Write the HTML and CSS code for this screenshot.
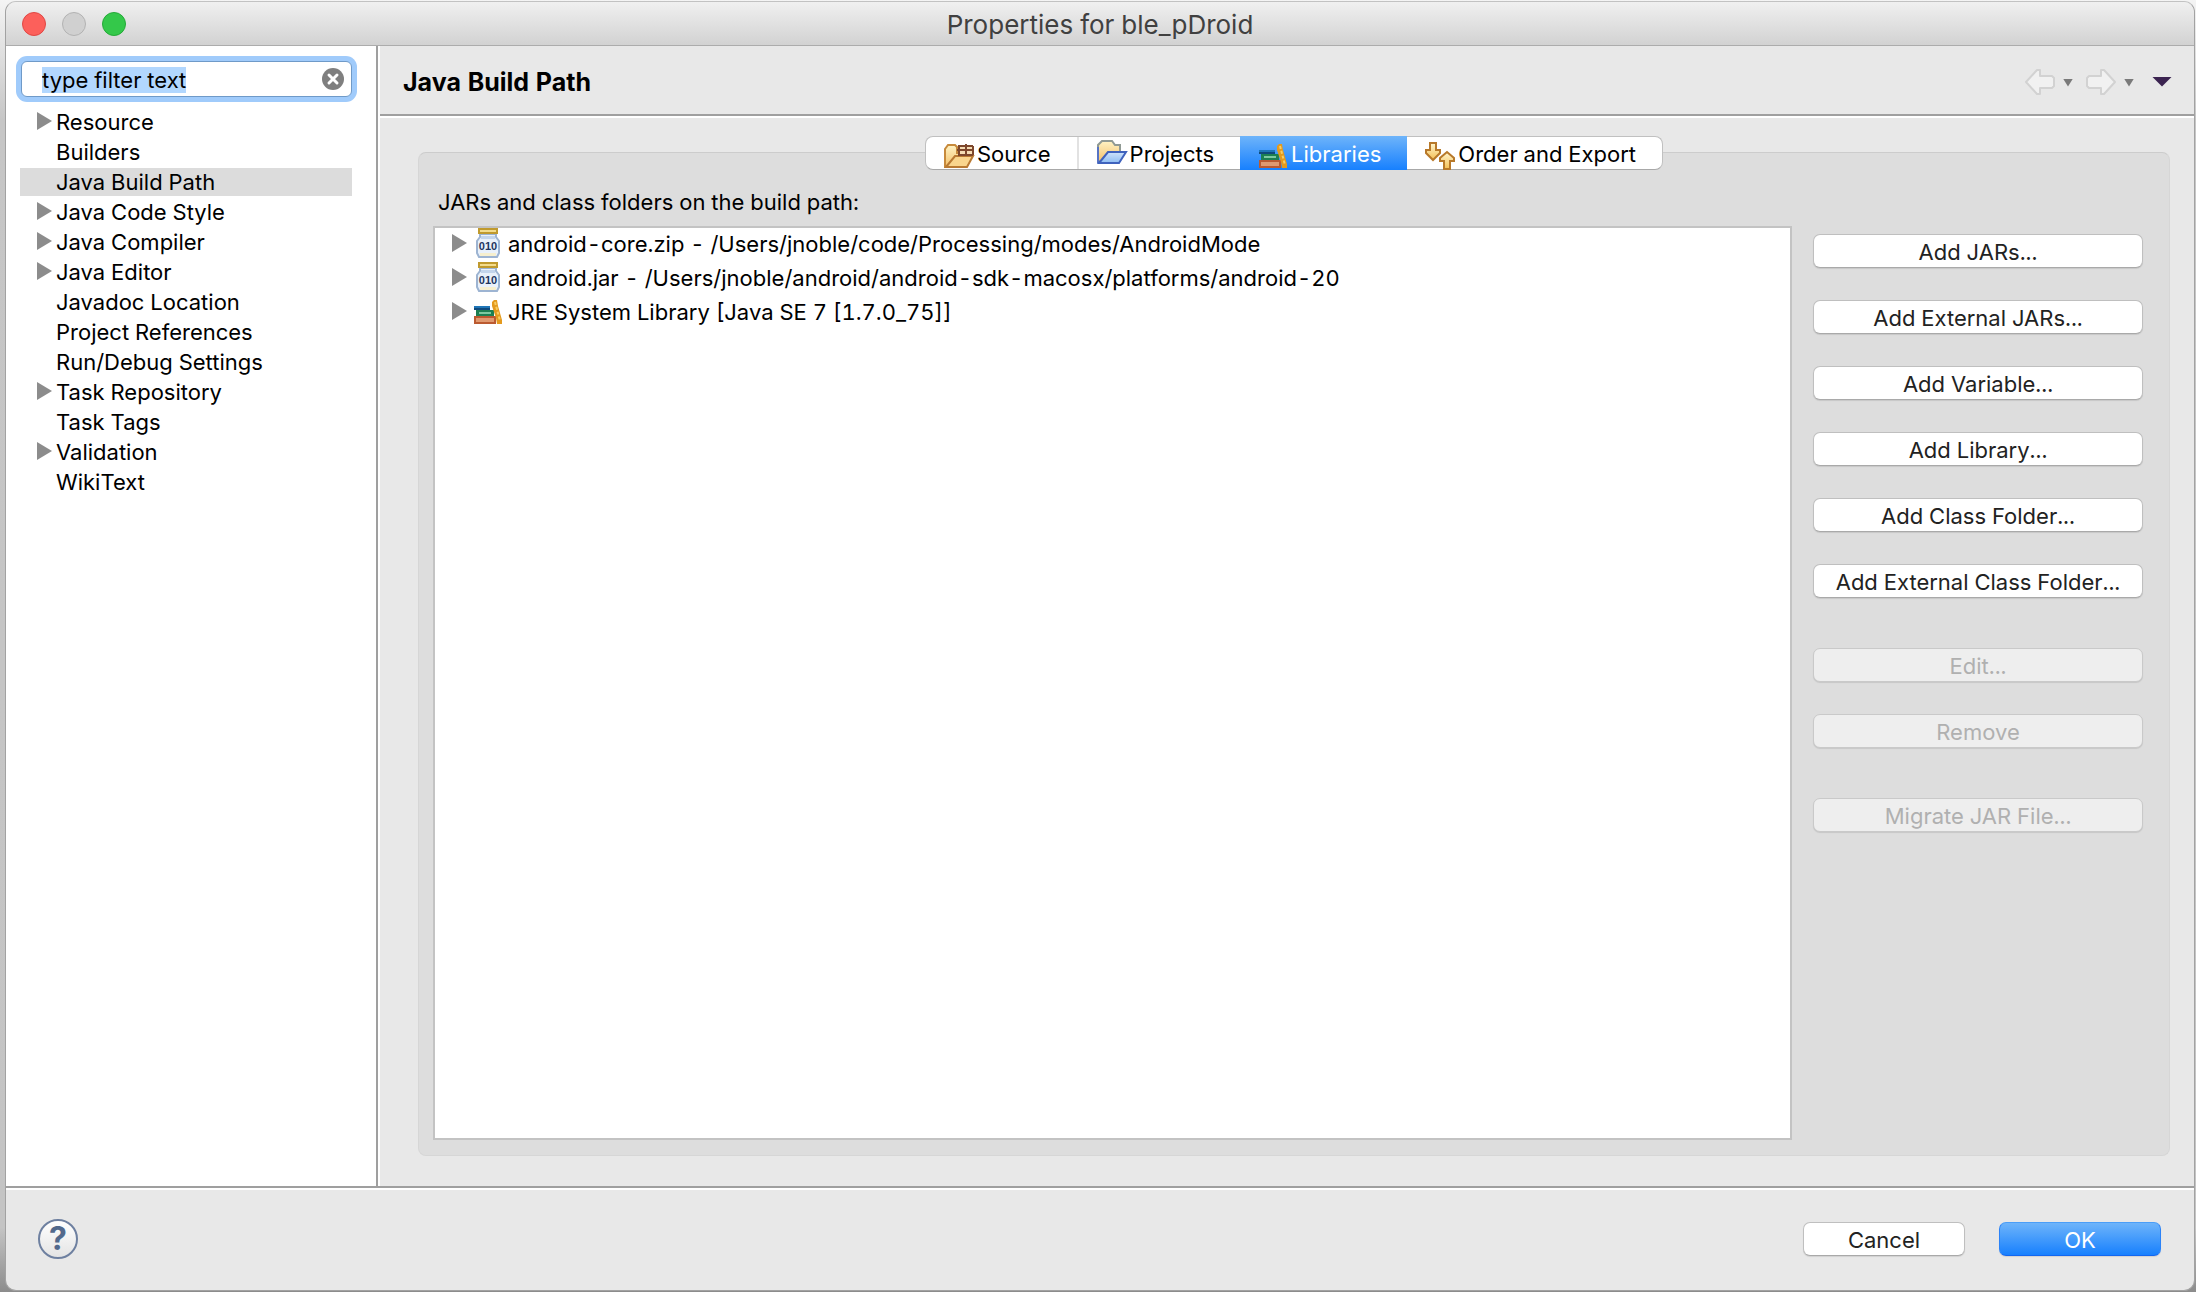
FILE: index.html
```html
<!DOCTYPE html>
<html lang="en">
<head>
<meta charset="utf-8">
<title>Properties for ble_pDroid</title>
<link rel="stylesheet" href="styles.css">
</head>
<body>
<svg class="defs" aria-hidden="true">
  <defs>
    <linearGradient id="fold" x1="0" y1="0" x2="0" y2="1"><stop offset="0" stop-color="#fff3c4"/><stop offset="1" stop-color="#f3c06a"/></linearGradient>
    <linearGradient id="blue" x1="0" y1="0" x2="0" y2="1"><stop offset="0" stop-color="#cfe3fb"/><stop offset="1" stop-color="#8dbcf2"/></linearGradient>
    <linearGradient id="gold" x1="0" y1="0" x2="0" y2="1"><stop offset="0" stop-color="#fff6cf"/><stop offset="1" stop-color="#f4bf55"/></linearGradient>
    <symbol id="jar" viewBox="0 0 32 32">
      <path d="M8 6h16v3l3 4v12l-2 4H7l-2-4V13l3-4z" fill="#e9f1fb" stroke="#9db4d2" stroke-width="2"/>
      <path d="M9 8h14v3H9z" fill="#c3d5ec"/>
      <path d="M8 25h16v3H8z" fill="#f6efcf"/>
      <rect x="7" y="1" width="18" height="4" fill="#f3dc8c" stroke="#c09a2e" stroke-width="2"/>
      <text x="16" y="22" text-anchor="middle" class="jar-bits">010</text>
    </symbol>
    <symbol id="books" viewBox="0 0 32 32">
      <rect x="2" y="10" width="16" height="4" fill="#1f76b8"/>
      <path d="M2 12h16v2H2z" fill="#0f4a7c"/>
      <rect x="4" y="14" width="18" height="6" fill="#1c7f52"/>
      <rect x="7" y="16" width="12" height="2" fill="#7cc9a0"/>
      <rect x="2" y="20" width="22" height="8" fill="#bb5a30"/>
      <rect x="4" y="22" width="18" height="4" fill="#e0996f"/>
      <path d="M20 6l2-2h3l1 6 2 7 2 7v4h-5l-1-6-2-6-2-6z" fill="#e49a1e"/>
      <path d="M23 6l5 19" stroke="#f9cd62" stroke-width="2" stroke-dasharray="3 2"/>
    </symbol>
    <symbol id="source" viewBox="0 0 32 32">
      <path d="M2 27V9l3-4h7l2 2v6h10v4l-5 10z" fill="url(#fold)" stroke="#c78a3c" stroke-width="2"/>
      <path d="M3 27l9-11h18l-6 11z" fill="#f9d58d" stroke="#b97a33" stroke-width="2"/>
      <rect x="16" y="6" width="14" height="9" fill="#f5dcb4"/>
      <path d="M16 6v9M23 4v12M30 6v9M15 6h15M14 10h17M15 15h15" fill="none" stroke="#7d472c" stroke-width="2"/>
    </symbol>
    <symbol id="project" viewBox="0 0 32 32">
      <path d="M2 22V5l4-4h10l3 4h5v10z" fill="url(#fold)" stroke="#909a94" stroke-width="2"/>
      <path d="M2 7v16" stroke="#5673c4" stroke-width="2"/>
      <path d="M3 23l9-11h18l-7 11z" fill="url(#blue)" stroke="#3f62bd" stroke-width="2"/>
    </symbol>
    <symbol id="order" viewBox="0 0 32 32">
      <path d="M6 3h6v7h4v3l-7 7-7-7v-3h4z" fill="url(#gold)" stroke="#b8792a" stroke-width="2"/>
      <path d="M20 29v-8h-4v-3l7-6 7 6v3h-4v8z" fill="url(#gold)" stroke="#b8792a" stroke-width="2"/>
    </symbol>
    <symbol id="arrow" viewBox="0 0 32 28">
      <path d="M2 14L13 2h3v6h12l2 2v8l-2 2H16v6h-3z" fill="#f1f1f1" stroke="#d2d2d2" stroke-width="2" stroke-linejoin="round"/>
    </symbol>
  </defs>
</svg>

<main class="window">
  <header class="titlebar">
    <div class="lights">
      <button class="light close" aria-label="Close"></button>
      <button class="light minimize" aria-label="Minimize" disabled></button>
      <button class="light zoom" aria-label="Zoom"></button>
    </div>
    <h1>Properties for ble_pDroid</h1>
  </header>

  <div class="body">
    <nav class="sidebar">
      <div class="search">
        <input id="filter" type="text" value="type filter text" aria-label="Filter" spellcheck="false">
        <button class="clear" aria-label="Clear filter"><svg viewBox="0 0 22 22"><circle cx="11" cy="11" r="11" fill="#7f7f7f"/><path d="M7 7l8 8M15 7l-8 8" stroke="#fff" stroke-width="3" stroke-linecap="round"/></svg></button>
      </div>
      <ul class="tree">
        <li class="parent">Resource</li>
        <li>Builders</li>
        <li class="selected">Java Build Path</li>
        <li class="parent">Java Code Style</li>
        <li class="parent">Java Compiler</li>
        <li class="parent">Java Editor</li>
        <li>Javadoc Location</li>
        <li>Project References</li>
        <li>Run/Debug Settings</li>
        <li class="parent">Task Repository</li>
        <li>Task Tags</li>
        <li class="parent">Validation</li>
        <li>WikiText</li>
      </ul>
    </nav>

    <section class="page">
      <header class="page-head">
        <h2>Java Build Path</h2>
        <div class="history">
          <button aria-label="Back" disabled><svg class="arrow"><use href="#arrow"/></svg></button>
          <button class="drop" aria-label="Back history" disabled></button>
          <button aria-label="Forward" disabled><svg class="arrow forward"><use href="#arrow"/></svg></button>
          <button class="drop" aria-label="Forward history" disabled></button>
          <button class="view-menu" aria-label="View menu"></button>
        </div>
      </header>

      <div class="page-body">
        <div class="tabs" role="tablist">
          <button role="tab"><svg><use href="#source"/></svg>Source</button>
          <button role="tab"><svg><use href="#project"/></svg>Projects</button>
          <button role="tab" aria-selected="true"><svg><use href="#books"/></svg>Libraries</button>
          <button role="tab"><svg><use href="#order"/></svg>Order and Export</button>
        </div>
        <div class="panel">
          <p class="caption" id="caption">JARs and class folders on the build path:</p>
          <div class="columns">
            <ul class="entries" aria-labelledby="caption">
              <li><svg><use href="#jar"/></svg>android-core.zip - /Users/jnoble/code/Processing/modes/AndroidMode</li>
              <li><svg><use href="#jar"/></svg>android.jar - /Users/jnoble/android/android-sdk-macosx/platforms/android-20</li>
              <li><svg><use href="#books"/></svg>JRE System Library [Java SE 7 [1.7.0_75]]</li>
            </ul>
            <div class="actions">
              <div class="group">
                <button class="push">Add JARs...</button>
                <button class="push">Add External JARs...</button>
                <button class="push">Add Variable...</button>
                <button class="push">Add Library...</button>
                <button class="push">Add Class Folder...</button>
                <button class="push">Add External Class Folder...</button>
              </div>
              <div class="group">
                <button class="push" disabled>Edit...</button>
                <button class="push" disabled>Remove</button>
              </div>
              <div class="group">
                <button class="push" disabled>Migrate JAR File...</button>
              </div>
            </div>
          </div>
        </div>
      </div>
    </section>
  </div>

  <footer class="footer">
    <button class="help" aria-label="Help">?</button>
    <div class="confirm">
      <button class="push">Cancel</button>
      <button class="push primary">OK</button>
    </div>
  </footer>
</main>
<script src="main.js"></script>
</body>
</html>
```
FILE: main.js
```js
const filter = document.getElementById('filter');
filter.focus();
filter.select();
document.querySelector('.clear').addEventListener('click', () => {
  filter.value = '';
  filter.focus();
});
```
FILE: styles.css
```css
* { box-sizing: border-box; }

body {
  margin: 0;
  min-height: 100vh;
  display: flex;
  padding: 1px 1px 1px 5px;
  background: linear-gradient(#f4f4f4, #c6c6c6 120px, #c4c4c4 95%, #8c8c8c);
  color: #000;
  font: 22px/30px Inter, "Liberation Sans", sans-serif;
  font-variant-numeric: tabular-nums;
}

button, input { font: inherit; color: inherit; }
button { margin: 0; padding: 0; border: 0; background: none; }
ul { margin: 0; padding: 0; list-style: none; }
svg { display: block; flex: none; }
.defs { position: absolute; width: 0; height: 0; }
.jar-bits { font: bold 11px "Liberation Sans", sans-serif; fill: #1e3560; }

.window {
  flex: 1;
  display: flex;
  flex-direction: column;
  border: 1px solid #a2a2a2;
  border-top-color: #c2c2c2;
  border-radius: 11px;
  background: #e8e8e8;
  overflow: hidden;
}

.titlebar {
  display: grid;
  grid-template-columns: 1fr auto 1fr;
  align-items: center;
  height: 44px;
  padding: 0 16px;
  border-bottom: 1px solid #acacac;
  background: linear-gradient(#f0f0f0, #d2d2d2);
}
.titlebar h1 { margin: 0; padding-top: 2px; font-size: 26px; font-weight: 400; color: #404040; }
.lights { display: flex; gap: 16px; }
.light { width: 24px; height: 24px; border: 1px solid; border-radius: 50%; }
.close { background: #fc605b; border-color: #df4744; }
.minimize { background: #d0d0d0; border-color: #b2b2b2; }
.zoom { background: #34c84a; border-color: #25a938; }

.body { flex: 1; display: flex; }
.sidebar {
  flex: none;
  width: 374px;
  padding: 15px 26px 0 14px;
  background: #fff;
  border-right: 2px solid #fff;
  box-shadow: inset -2px 0 #9f9f9f;
}
.search { position: relative; margin: 0 0 11px 1px; }
.search input {
  display: block;
  width: 100%;
  height: 36px;
  padding: 2px 50px 0 20px;
  border: 1px solid #6f9ac8;
  border-radius: 6px;
  outline: 0;
  background: #fff;
  box-shadow: 0 0 0 5px #a0cbfb;
}
.search input::selection { background: #b2d7fe; color: #000; }
.clear { position: absolute; right: 8px; top: 7px; width: 22px; height: 22px; }
.clear svg { width: 22px; height: 22px; }

.tree li {
  position: relative;
  height: 28px;
  margin-bottom: 2px;
  padding-left: 36px;
  line-height: 28px;
}
.tree .selected { background: #dcdcdc; }
.tree .parent::before, .entries li::before {
  content: "";
  width: 15px;
  height: 18px;
  background: #8c8c8c;
  clip-path: polygon(0 0, 100% 50%, 0 100%);
}
.tree .parent::before { position: absolute; left: 17px; top: 4px; }

.page { flex: 1; display: flex; flex-direction: column; }
.page-head {
  display: flex;
  align-items: center;
  justify-content: space-between;
  height: 72px;
  padding: 1px 22px 0 23px;
  border-bottom: 2px solid #fff;
  box-shadow: inset 0 -2px #9f9f9f;
}
.page-head h2 { margin: 0; font-size: 25px; font-weight: 700; }
.history { display: flex; align-items: center; }
.arrow { width: 32px; height: 28px; }
.forward { transform: scaleX(-1); }
.drop, .view-menu { clip-path: polygon(0 0, 100% 0, 50% 100%); }
.drop { width: 10px; height: 8px; margin: 2px 12px 0 7px; background: #7a7a7a; }
.view-menu { width: 20px; height: 10px; margin-left: 6px; background: #3b2350; }

.page-body { flex: 1; display: flex; flex-direction: column; padding: 18px 24px 30px 38px; }
.tabs {
  position: relative;
  display: flex;
  align-self: center;
  height: 34px;
  margin-bottom: -18px;
  border: 1px solid #c0c0c0;
  border-bottom-color: #a8a8a8;
  border-radius: 8px;
  background: #fff;
}
.tabs button { display: flex; align-items: center; gap: 2px; padding: 1px 26px 0 17px; }
.tabs button + button { border-left: 2px solid #e2e2e2; }
.tabs svg { width: 32px; height: 32px; margin-top: 5px; }
.tabs button[aria-selected] {
  margin: -1px 0;
  border: 0;
  background: linear-gradient(#6eb4fa, #1780fe);
  color: #fff;
}
.tabs button[aria-selected] + button { border: 0; }

.panel {
  flex: 1;
  display: flex;
  flex-direction: column;
  padding: 34px 26px 15px 14px;
  border: 1px solid #d6d6d6;
  border-top-color: #cccccc;
  border-radius: 8px;
  background: #dddddd;
}
.caption { margin: 0 0 9px 5px; }
.columns { flex: 1; display: flex; gap: 21px; }
.entries { flex: 1; border: 2px solid #c3c3c3; background: #fff; }
.entries li { display: flex; height: 34px; padding-left: 17px; line-height: 32px; }
.entries li::before { margin: 6px 5px 0 0; flex: none; }
.entries svg { width: 32px; height: 32px; margin-right: 4px; }

.actions { display: flex; flex-direction: column; gap: 50px; width: 330px; padding-top: 8px; }
.group { display: flex; flex-direction: column; gap: 32px; }
.push {
  height: 34px;
  padding-top: 2px;
  border: 1px solid #bfbfbf;
  border-bottom-color: #a9a9a9;
  border-radius: 7px;
  background: #fff;
  box-shadow: 0 1px 1px #0000001a;
  color: #222;
}
.push:disabled { background: #eeeeee; border-color: #c9c9c9; color: #b0b0b0; }
.primary {
  border-color: #4a9ef8 #2b83f8 #1266f0;
  background: linear-gradient(#6eb4fa, #1780fe);
  color: #fff;
}

.footer {
  display: flex;
  align-items: center;
  justify-content: space-between;
  height: 104px;
  padding: 0 33px 0 32px;
  border-top: 2px solid #9f9f9f;
  box-shadow: inset 0 2px #fff;
}
.help {
  width: 40px;
  height: 40px;
  border: 2px solid #6e80a0;
  border-radius: 50%;
  background: linear-gradient(#fff, #e4e4e4);
  color: #52698c;
  font-size: 32px;
  font-weight: 700;
  line-height: 36px;
}
.confirm { display: flex; gap: 34px; }
.confirm .push { width: 162px; }
```
